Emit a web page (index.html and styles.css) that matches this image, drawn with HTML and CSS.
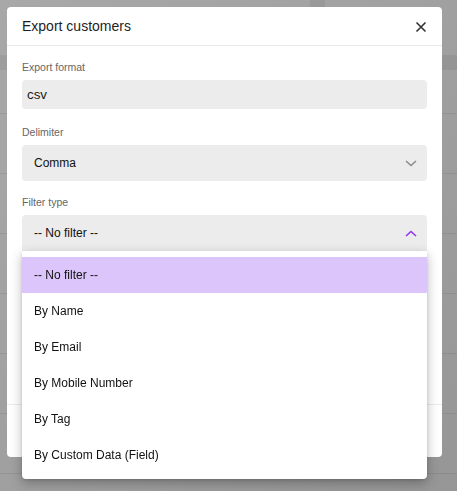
FILE: index.html
```html
<!DOCTYPE html>
<html lang="en">
<head>
<meta charset="utf-8">
<title>Export customers</title>
<link rel="stylesheet" href="styles.css">
</head>
<body>
<div class="page">
  <div class="page-top"><span class="page-chip"></span></div>
  <div class="page-head"></div>
  <div class="page-row first"></div>
  <div class="page-row"></div>
  <div class="page-row"></div>
  <div class="page-row"></div>
  <div class="page-row"></div>
  <div class="page-row"></div>
  <div class="page-row"></div>
</div>

<div class="overlay">
  <div class="modal">
    <div class="modal-header">
      <h2 class="modal-title">Export customers</h2>
      <button class="close" aria-label="Close">
        <svg width="12" height="12" viewBox="0 0 12 12"><path d="M1.5 1.5 L10.5 10.5 M10.5 1.5 L1.5 10.5" stroke="#333" stroke-width="1.6" stroke-linecap="butt" fill="none"/></svg>
      </button>
    </div>
    <div class="modal-body">
      <div class="field first">
        <label class="label">Export format</label>
        <div class="input">csv</div>
      </div>
      <div class="field">
        <label class="label">Delimiter</label>
        <div class="select">
          <span>Comma</span>
          <svg class="chev" width="12" height="7" viewBox="0 0 12 7"><path d="M1 1 L6 5.5 L11 1" stroke="#8a8a8a" stroke-width="1.4" fill="none"/></svg>
        </div>
      </div>
      <div class="field filter">
        <label class="label">Filter type</label>
        <div class="select open">
          <span>-- No filter --</span>
          <svg class="chev" width="12" height="7" viewBox="0 0 12 7"><path d="M1 6 L6 1.5 L11 6" stroke="#8e36f0" stroke-width="1.6" fill="none"/></svg>
        </div>
        <ul class="menu">
          <li class="menu-item active">-- No filter --</li>
          <li class="menu-item">By Name</li>
          <li class="menu-item">By Email</li>
          <li class="menu-item">By Mobile Number</li>
          <li class="menu-item">By Tag</li>
          <li class="menu-item">By Custom Data (Field)</li>
        </ul>
      </div>
    </div>
    <div class="modal-footer"></div>
  </div>
</div>
</body>
</html>
```

FILE: styles.css
```css
* { box-sizing: border-box; }
html, body { margin: 0; padding: 0; }
body {
  font-family: "Liberation Sans", Arial, sans-serif;
  background: linear-gradient(135deg, #a8a8a8 0%, #a0a0a0 50%, #969696 100%);
  height: 491px;
  overflow: hidden;
}

.page { width: 100%; }
.page-top { height: 55px; position: relative; }
.page-chip {
  position: absolute;
  left: 310px; top: 0;
  width: 15px; height: 7px;
  background: rgba(0,0,0,0.06);
}
.page-head { height: 15px; background: rgba(0,0,0,0.06); }
.page-row {
  height: 60px;
  border-bottom: 1px solid rgba(0,0,0,0.07);
}
.page-row.first { height: 44px; }

.overlay {
  position: fixed;
  inset: 0;
  padding: 7px 15px 0 7px;
}
.modal {
  width: 435px;
  height: 450px;
  background: #fff;
  border-radius: 4px;
  display: flex;
  flex-direction: column;
}
.modal-header {
  height: 39px;
  border-bottom: 1px solid #e9e9e9;
  display: flex;
  align-items: center;
  justify-content: space-between;
  padding: 0 15px 0 15px;
}
.modal-title {
  margin: 0;
  font-size: 14px;
  font-weight: normal;
  color: #1e1e1e;
}
.close {
  border: 0;
  background: none;
  padding: 0;
  width: 12px;
  height: 12px;
  display: flex;
  position: relative;
  top: 1px;
}

.modal-body {
  flex: 1;
  padding: 15px 15px 0;
  border-bottom: 1px solid #ececec;
}
.field { margin-bottom: 15px; }
.field.first { margin-bottom: 17px; }
.field.filter { position: relative; }
.label {
  display: block;
  font-size: 10.5px;
  line-height: 13px;
  color: #666;
  margin-bottom: 6px;
}
.input {
  height: 29px;
  background: #ececec;
  border-radius: 4px;
  padding-left: 5px;
  display: flex;
  align-items: center;
  font-size: 13.33px;
  color: #1a1a1a;
}
.select {
  height: 36px;
  background: #ececec;
  border-radius: 4px;
  padding: 0 10px 0 12px;
  display: flex;
  align-items: center;
  justify-content: space-between;
  font-size: 12px;
  color: #111;
}
.select.open {
  border-radius: 4px 4px 0 0;
}
.chev { display: block; }

.menu {
  position: absolute;
  left: 0; right: 0;
  top: 55px;
  margin: 0;
  padding: 6px 0;
  list-style: none;
  background: #fff;
  border-radius: 0 0 4px 4px;
  box-shadow: 0 4px 12px rgba(0,0,0,0.28), 0 1px 3px rgba(0,0,0,0.12);
  z-index: 2;
}
.menu-item {
  height: 36px;
  padding-left: 12px;
  display: flex;
  align-items: center;
  font-size: 12px;
  color: #111;
}
.menu-item.active { background: #dbc5fa; }

.modal-footer { height: 52px; }
```
